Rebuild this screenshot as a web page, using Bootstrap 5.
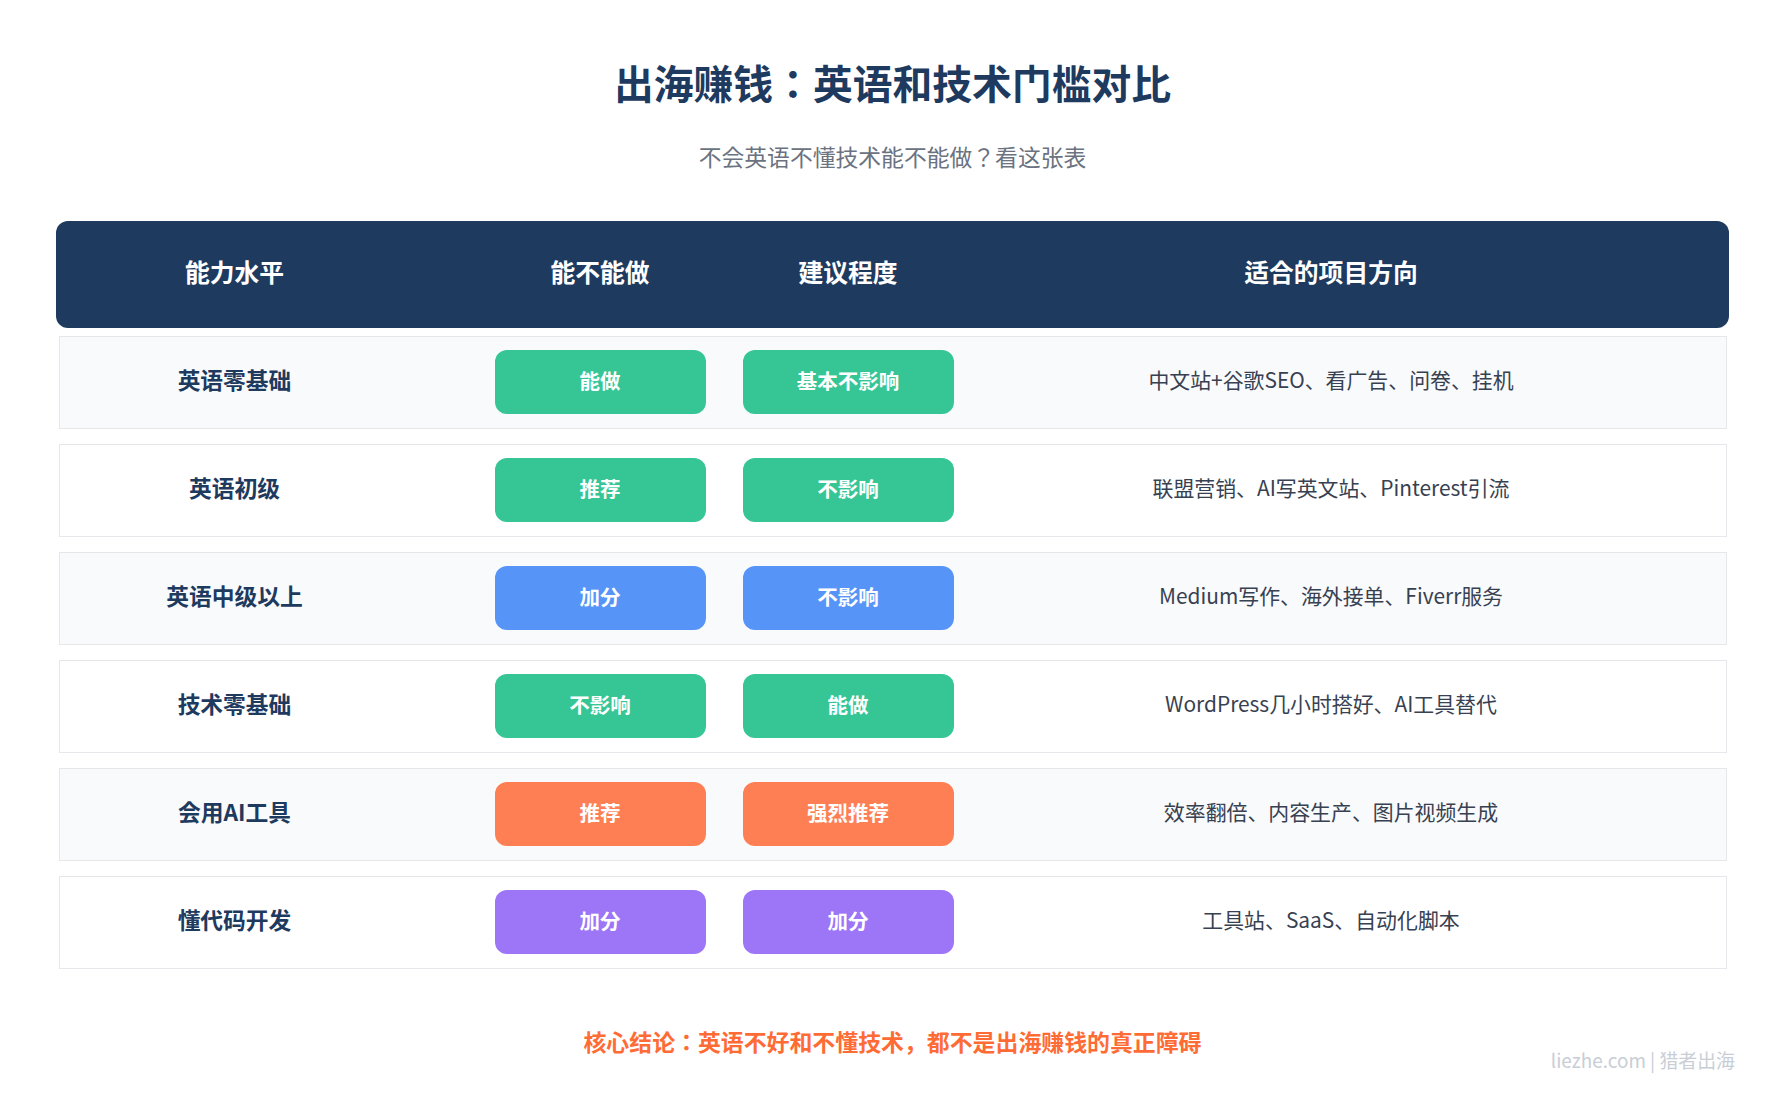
<!DOCTYPE html>
<html lang="en">
<head>
  <meta charset="UTF-8">
  <title>出海赚钱：英语和技术门槛对比</title>
  <link href="https://cdn.jsdelivr.net/npm/bootstrap@5.3.0/dist/css/bootstrap.min.css" rel="stylesheet">
  <style>
    body { font-family: "Noto Sans CJK JP", "Noto Sans", sans-serif; background: #fff; color: #374151; height: 1110px; overflow: hidden; }
    .page-wrap { padding: 0 56px; position: relative; height: 1110px; }
    .page-title { font-size: 39.8px; font-weight: 700; color: #1e3a5f; line-height: 58px; padding-top: 53px; margin: 0; }
    .page-sub { font-size: 22.8px; color: #6b7280; line-height: 34px; margin: 0; padding-top: 29px; }
    .cols { display: grid; grid-template-columns: 416px 248px 248px 1fr; align-items: center; text-align: center; }
    .cols > :first-child { padding-right: 67px; }
    .cols > :last-child { padding-right: 36px; }
    .head-bar { margin-top: 47px; height: 107px; background: #1e3a5f; color: #fff; border-radius: 12px; font-size: 24.8px; font-weight: 700; padding: 0 3px 5px 4px; }
    .rows-box { margin: 8px 2px 0 3px; display: flex; flex-direction: column; gap: 15px; }
    .data-row { height: 93px; border: 1px solid #e5e7eb; background: #fff; }
    .data-row.alt { background: #f9fafb; }
    .row-label { font-size: 22.76px; font-weight: 700; color: #1e3a5f; padding-bottom: 4px; }
    .pill { width: 211px; height: 64px; margin: 0 auto 2px; padding-bottom: 2px; border-radius: 12px; color: #fff; font-size: 20.5px; font-weight: 700; display: flex; align-items: center; justify-content: center; }
    .pill-green { background: #36c595; }
    .pill-blue { background: #5794f7; }
    .pill-orange { background: #ff7f55; }
    .pill-purple { background: #9d75f7; }
    .row-desc { font-size: 20.9px; color: #374151; padding-bottom: 6px; }
    .conclusion { margin: 55px 0 0; font-size: 22.9px; font-weight: 700; color: #ff6b35; line-height: 34px; }
    .watermark { position: absolute; right: 50px; bottom: 35px; font-size: 18.9px; color: #c9ced6; line-height: 30px; }
  </style>
</head>
<body>
<div class="page-wrap">
  <h1 class="page-title text-center">出海赚钱：英语和技术门槛对比</h1>
  <p class="page-sub text-center">不会英语不懂技术能不能做？看这张表</p>

  <div class="head-bar cols">
    <div>能力水平</div>
    <div>能不能做</div>
    <div>建议程度</div>
    <div>适合的项目方向</div>
  </div>

  <div class="rows-box">
    <div class="data-row alt cols">
      <div class="row-label">英语零基础</div>
      <div><div class="pill pill-green">能做</div></div>
      <div><div class="pill pill-green">基本不影响</div></div>
      <div class="row-desc">中文站+谷歌SEO、看广告、问卷、挂机</div>
    </div>
    <div class="data-row cols">
      <div class="row-label">英语初级</div>
      <div><div class="pill pill-green">推荐</div></div>
      <div><div class="pill pill-green">不影响</div></div>
      <div class="row-desc">联盟营销、AI写英文站、Pinterest引流</div>
    </div>
    <div class="data-row alt cols">
      <div class="row-label">英语中级以上</div>
      <div><div class="pill pill-blue">加分</div></div>
      <div><div class="pill pill-blue">不影响</div></div>
      <div class="row-desc">Medium写作、海外接单、Fiverr服务</div>
    </div>
    <div class="data-row cols">
      <div class="row-label">技术零基础</div>
      <div><div class="pill pill-green">不影响</div></div>
      <div><div class="pill pill-green">能做</div></div>
      <div class="row-desc">WordPress几小时搭好、AI工具替代</div>
    </div>
    <div class="data-row alt cols">
      <div class="row-label">会用AI工具</div>
      <div><div class="pill pill-orange">推荐</div></div>
      <div><div class="pill pill-orange">强烈推荐</div></div>
      <div class="row-desc">效率翻倍、内容生产、图片视频生成</div>
    </div>
    <div class="data-row cols">
      <div class="row-label">懂代码开发</div>
      <div><div class="pill pill-purple">加分</div></div>
      <div><div class="pill pill-purple">加分</div></div>
      <div class="row-desc">工具站、SaaS、自动化脚本</div>
    </div>
  </div>

  <p class="conclusion text-center">核心结论：英语不好和不懂技术，都不是出海赚钱的真正障碍</p>
  <div class="watermark">liezhe.com | 猎者出海</div>
</div>
<script src="https://cdn.jsdelivr.net/npm/bootstrap@5.3.0/dist/js/bootstrap.bundle.min.js"></script>
</body>
</html>
